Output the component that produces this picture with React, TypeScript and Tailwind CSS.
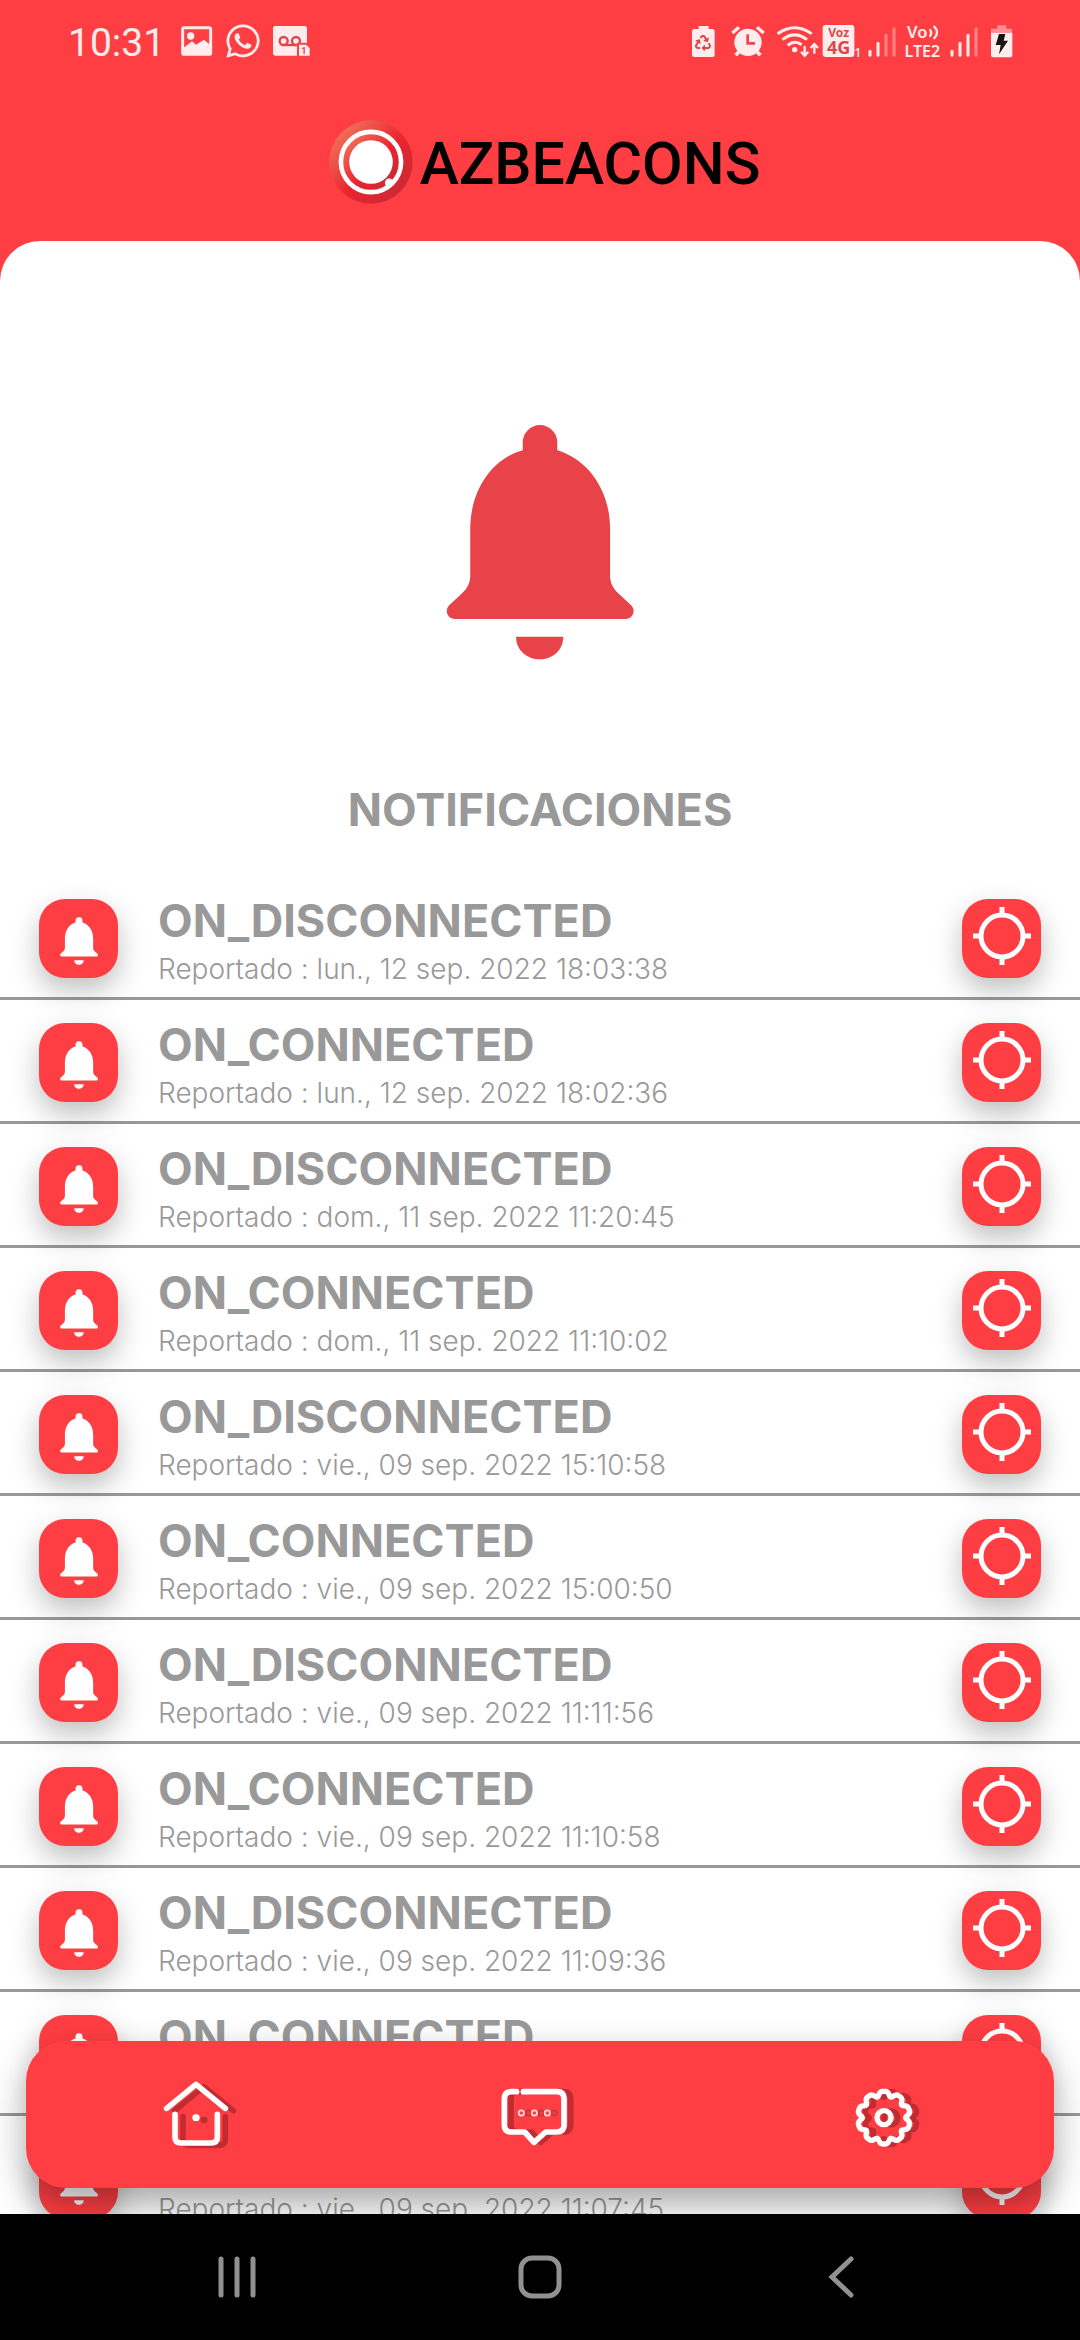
import React from 'react';
import { FaRecycle, FaWhatsapp } from 'react-icons/fa';

interface Notification {
  id: number;
  event: string;
  reported: string;
}

const notifications: Notification[] = [
  { id: 1, event: 'ON_DISCONNECTED', reported: 'lun., 12 sep. 2022 18:03:38' },
  { id: 2, event: 'ON_CONNECTED', reported: 'lun., 12 sep. 2022 18:02:36' },
  { id: 3, event: 'ON_DISCONNECTED', reported: 'dom., 11 sep. 2022 11:20:45' },
  { id: 4, event: 'ON_CONNECTED', reported: 'dom., 11 sep. 2022 11:10:02' },
  { id: 5, event: 'ON_DISCONNECTED', reported: 'vie., 09 sep. 2022 15:10:58' },
  { id: 6, event: 'ON_CONNECTED', reported: 'vie., 09 sep. 2022 15:00:50' },
  { id: 7, event: 'ON_DISCONNECTED', reported: 'vie., 09 sep. 2022 11:11:56' },
  { id: 8, event: 'ON_CONNECTED', reported: 'vie., 09 sep. 2022 11:10:58' },
  { id: 9, event: 'ON_DISCONNECTED', reported: 'vie., 09 sep. 2022 11:09:36' },
  { id: 10, event: 'ON_CONNECTED', reported: 'vie., 09 sep. 2022 11:08:12' },
  { id: 11, event: 'ON_DISCONNECTED', reported: 'vie., 09 sep. 2022 11:07:45' },
];

const BellIcon = ({ className }: { className: string }) => (
  <svg viewBox="80 70 566 708" className={className} fill="currentColor" aria-hidden="true">
    <path d="M311 148V124a52 52 0 0 1 104 0V148C505 175 574 265 574 385V525C574 545 582 563 597 577L638 615C652 630 643 656 621 656H107C84 656 75 630 89 615L130 577C146 562 153 545 153 525V385C153 265 222 172 311 148Z" />
    <path d="M291 709H433C433 750 400 777 362 777S291 750 291 709Z" />
  </svg>
);

const TargetIcon = () => (
  <svg viewBox="0 0 58 58" className="h-[58px] w-[58px]" fill="none" stroke="white" strokeWidth="5" aria-hidden="true">
    <circle cx="29" cy="29" r="21" />
    <path d="M29 0v7M29 51v7M0 29h7M51 29h7" />
  </svg>
);

const SignalIcon = ({ className, strength }: { className: string; strength: number }) => (
  <svg viewBox="0 0 90 114" className={className} stroke="#ffeded" strokeWidth="9" strokeLinecap="round" aria-hidden="true">
    {[88, 64, 40, 20].map((top, i) => (
      <path key={top} d={`M${9 + i * 24} ${top}V100`} opacity={i < strength ? 1 : 0.4} />
    ))}
  </svg>
);

const StatusBar = () => (
  <div className="flex h-[82px] items-center justify-between pr-[66px] pl-[68px] text-[#ffeded]">
    <div className="flex items-center">
      <span className="w-[108px] pt-1 font-[Roboto,sans-serif] text-[39px] leading-none">10:31</span>
      <svg viewBox="408 66 129 114" className="h-[38px] w-[43px]" aria-hidden="true">
        <rect x="428" y="83" width="84" height="80" rx="5" fill="none" stroke="currentColor" strokeWidth="9" />
        <circle cx="452" cy="108" r="11" fill="currentColor" />
        <path d="M430 144L456 124L468 134L492 119L512 136V164H430Z" fill="currentColor" />
      </svg>
      <FaWhatsapp className="mx-1 h-[38px] w-[40px]" />
      <svg viewBox="678 66 135 114" className="h-[38px] w-[45px]" aria-hidden="true">
        <rect x="696" y="78" width="102" height="89" rx="7" fill="currentColor" />
        <g fill="none" stroke="#e0454c" strokeWidth="7">
          <circle cx="728" cy="123" r="12" />
          <circle cx="765" cy="123" r="12" />
          <path d="M728 135H765" />
        </g>
        <path d="M768 172V128H796L810 140V172Z" fill="#ff3f44" />
        <path d="M774 167V134H795L806 144V167Z" fill="currentColor" />
        <text x="781" y="161" fill="#e0454c" fontFamily="Roboto, sans-serif" fontSize="27" fontWeight="700">1</text>
      </svg>
    </div>

    <div className="flex items-center">
      <div className="relative h-[38px] w-[34px]">
        <svg viewBox="54 66 102 114" className="h-[38px] w-[34px]" fill="currentColor" aria-hidden="true">
          <path d="M83 78H113V87H124Q131 87 131 94V164Q131 171 124 171H70Q63 171 63 164V94Q63 87 70 87H83Z" />
        </svg>
        <FaRecycle className="absolute top-[13px] left-[6px] h-4 w-4 text-[#e0454c]" />
      </div>
      <svg viewBox="156 66 144 114" className="h-[38px] w-[48px]" fill="none" stroke="currentColor" aria-hidden="true">
        <circle cx="231" cy="127" r="41" fill="currentColor" stroke="none" />
        <path d="M184 99L204 82M258 82L278 99" strokeWidth="10" />
        <path d="M206 153L194 166M256 153L268 166" strokeWidth="11" />
        <path d="M230 103V130H252" stroke="#f0454b" strokeWidth="8" />
      </svg>
      <svg viewBox="300 66 150 114" className="h-[38px] w-[50px]" fill="none" stroke="currentColor" strokeWidth="9" aria-hidden="true">
        <path d="M320 101Q371 65 422 101M334 119Q371 90 408 119M350 136Q371 119 392 134" />
        <circle cx="371" cy="149" r="8" fill="currentColor" stroke="none" />
        <path d="M401 138V164M390 155L401 167L412 155M430 161V135M419 144L430 132L441 144" strokeWidth="7" />
      </svg>
      <svg viewBox="450 66 132 114" className="h-[38px] w-[44px]" fill="currentColor" fontFamily="Noto Sans, sans-serif" fontWeight="700" aria-hidden="true">
        <rect x="455" y="75" width="95" height="96" rx="9" />
        <text x="503" y="111" fill="#e0454c" fontSize="36" textAnchor="middle">Voz</text>
        <text x="503" y="163" fill="#e0454c" fontSize="54" textAnchor="middle">4G</text>
        <text x="550" y="170" fontSize="38" fontWeight="500">1</text>
      </svg>
      <SignalIcon className="mr-1 ml-[2px] h-[38px] w-[30px]" strength={2} />
      <svg viewBox="690 66 132 114" className="h-[38px] w-[44px]" fill="currentColor" fontFamily="Noto Sans, sans-serif" fontWeight="600" aria-hidden="true">
        <text x="708" y="115" fontSize="50">Vo</text>
        <path d="M776 88Q785 99 776 110M788 78Q808 97 788 117" fill="none" stroke="currentColor" strokeWidth="7" />
        <text x="754" y="170" fontSize="48" textAnchor="middle">LTE2</text>
      </svg>
      <SignalIcon className="mr-[5px] ml-1 h-[38px] w-[30px]" strength={3} />
      <svg viewBox="942 66 90 114" className="h-[38px] w-[30px]" aria-hidden="true">
        <path d="M982 76H1009V86H1026V98H963V86H982Z" fill="#ff8f92" />
        <path d="M963 98H1027V166Q1027 172 1021 172H969Q963 172 963 166Z" fill="currentColor" />
        <path d="M987 102H1006L1001 122H1014L987 163L992 135H977Z" fill="#141414" />
      </svg>
    </div>
  </div>
);

const Logo = () => (
  <div className="flex h-[159px] items-center justify-center pl-2">
    <svg viewBox="54 56 260 260" className="mr-[6px] h-[86px] w-[86px]" aria-hidden="true">
      <defs>
        <linearGradient id="outer" x1="0.1" y1="0.1" x2="0.9" y2="0.9">
          <stop offset="0" stopColor="#f2745b" />
          <stop offset="0.55" stopColor="#ea2430" />
          <stop offset="1" stopColor="#c92a34" />
        </linearGradient>
      </defs>
      <circle cx="184" cy="186" r="126" fill="url(#outer)" />
      <circle cx="184" cy="186" r="91" fill="url(#outer)" stroke="white" strokeWidth="14" />
      <circle cx="184" cy="186" r="66" fill="white" />
      <circle cx="239" cy="249" r="13" fill="white" />
    </svg>
    <span className="pt-1 font-[Roboto,sans-serif] text-[59px] leading-none font-medium text-black">AZBEACONS</span>
  </div>
);

const HomeShape = () => (
  <>
    <path d="M80 145L168 73L256 145" />
    <path d="M105 163V230Q105 249 124 249H213Q232 249 232 230V163" />
    <path d="M167 173H169" strokeWidth="20" />
  </>
);

const HomeIcon = () => (
  <svg viewBox="-9 0 360 330" className="h-[110px] w-[120px]" fill="none" strokeWidth="17" strokeLinecap="round" strokeLinejoin="round" aria-hidden="true">
    <g stroke="#c22b32" transform="translate(24 7)"><HomeShape /></g>
    <g stroke="white"><HomeShape /></g>
  </svg>
);

const bubble = 'M130 95H231Q252 95 252 116V196Q252 216 231 216H197L162 247L134 216H94Q73 216 73 196V116Q73 95 94 95H110';

const ChatIcon = () => (
  <svg viewBox="0 0 360 330" className="h-[110px] w-[120px]" fill="none" strokeLinecap="round" strokeLinejoin="round" aria-hidden="true">
    <path d={bubble} stroke="#c22b32" strokeWidth="17" transform="translate(20 0)" />
    <g stroke="#c9363d" strokeWidth="5">
      <circle cx="145" cy="159" r="8" />
      <circle cx="184" cy="159" r="8" />
      <circle cx="223" cy="159" r="8" />
    </g>
    <path d={bubble} stroke="white" strokeWidth="17" />
    <g stroke="#ffdcdc" strokeWidth="5">
      <circle cx="124" cy="159" r="8" />
      <circle cx="163" cy="159" r="8" />
      <circle cx="202" cy="159" r="8" />
    </g>
  </svg>
);

// ten round teeth around the hub
const gear = Array.from({ length: 120 }, (_, i) => {
  const angle = (i * Math.PI) / 60;
  const radius = 74 + 7 * Math.cos(10 * angle) - 2 * Math.cos(20 * angle);
  const x = 162 + radius * Math.sin(angle);
  const y = 173 - radius * Math.cos(angle);
  return `${i === 0 ? 'M' : 'L'}${x.toFixed(1)} ${y.toFixed(1)}`;
}).join('') + 'Z';

const GearIcon = () => (
  <svg viewBox="-21 0 360 330" className="h-[110px] w-[120px]" fill="none" strokeWidth="16" strokeLinejoin="round" aria-hidden="true">
    <g stroke="#c22b32" transform="translate(21 1)">
      <path d={gear} />
      <circle cx="162" cy="173" r="21" />
    </g>
    <path d={gear} stroke="white" />
    <circle cx="162" cy="173" r="21" stroke="white" />
  </svg>
);

const NotificationRow = ({ item }: { item: Notification }) => (
  <li className="flex items-start border-b-3 border-[#999999] px-[39px] pt-[23px] pb-[6px]">
    <div className="flex h-[79px] w-[79px] shrink-0 items-center justify-center rounded-[26px] bg-[#ff3e43] pt-1 text-white shadow-[0_12px_28px_rgba(0,0,0,0.25)]">
      <BellIcon className="h-12 w-[38px]" />
    </div>
    <div className="ml-10 min-w-0 flex-1 whitespace-nowrap text-[#999999]">
      <h2 className="text-[45px] leading-[44px] font-bold">{item.event}</h2>
      <p className="mt-1 text-[28px] leading-[44px] font-light">Reportado : {item.reported}</p>
    </div>
    <button
      type="button"
      aria-label="Ver ubicación"
      className="flex h-[79px] w-[79px] shrink-0 items-center justify-center rounded-[26px] bg-[#ff3e43] pb-[6px] shadow-[0_12px_28px_rgba(0,0,0,0.25)]"
    >
      <TargetIcon />
    </button>
  </li>
);

const SystemNav = () => (
  <div className="grid h-[126px] shrink-0 grid-cols-3 items-center justify-items-center bg-black px-[86px]">
    <button type="button" aria-label="Recientes">
      <svg viewBox="0 0 44 44" className="h-11 w-11" stroke="#919191" strokeWidth="5" strokeLinecap="round" aria-hidden="true">
        <path d="M6 4V40M22 4V40M38 4V40" />
      </svg>
    </button>
    <button type="button" aria-label="Inicio">
      <svg viewBox="0 0 44 44" className="h-11 w-11" fill="none" stroke="#919191" strokeWidth="5" aria-hidden="true">
        <rect x="3" y="3" width="38" height="38" rx="11" />
      </svg>
    </button>
    <button type="button" aria-label="Atrás">
      <svg viewBox="0 0 44 44" className="h-11 w-11" fill="none" stroke="#919191" strokeWidth="5" strokeLinecap="round" aria-hidden="true">
        <path d="M30 4L11 22L30 40" />
      </svg>
    </button>
  </div>
);

const App = () => {
  return (
    <div className="flex h-screen flex-col bg-[#ff3e43] font-[Inter,sans-serif]">
      <header className="shrink-0">
        <StatusBar />
        <Logo />
      </header>

      <div className="relative min-h-0 flex-1 overflow-hidden rounded-t-[40px] bg-white">
        <main className="h-full overflow-y-auto [scrollbar-width:none]">
          <BellIcon className="mx-auto mt-[183px] h-[236px] w-[188px] text-[#e84349]" />
          <h1 className="mt-[120px] text-center text-[45px] leading-[60px] font-bold text-[#999999]">NOTIFICACIONES</h1>
          <ul className="mt-9">
            {notifications.map((item) => (
              <NotificationRow key={item.id} item={item} />
            ))}
          </ul>
        </main>

        <nav className="absolute inset-x-[26px] bottom-[26px] grid h-[147px] grid-cols-3 items-center justify-items-center rounded-[40px] bg-[#ff3e43] shadow-[0_16px_36px_rgba(0,0,0,0.35)]">
          <button type="button" aria-label="Inicio"><HomeIcon /></button>
          <button type="button" aria-label="Mensajes"><ChatIcon /></button>
          <button type="button" aria-label="Ajustes"><GearIcon /></button>
        </nav>
      </div>

      <SystemNav />
    </div>
  );
};

export default App;
